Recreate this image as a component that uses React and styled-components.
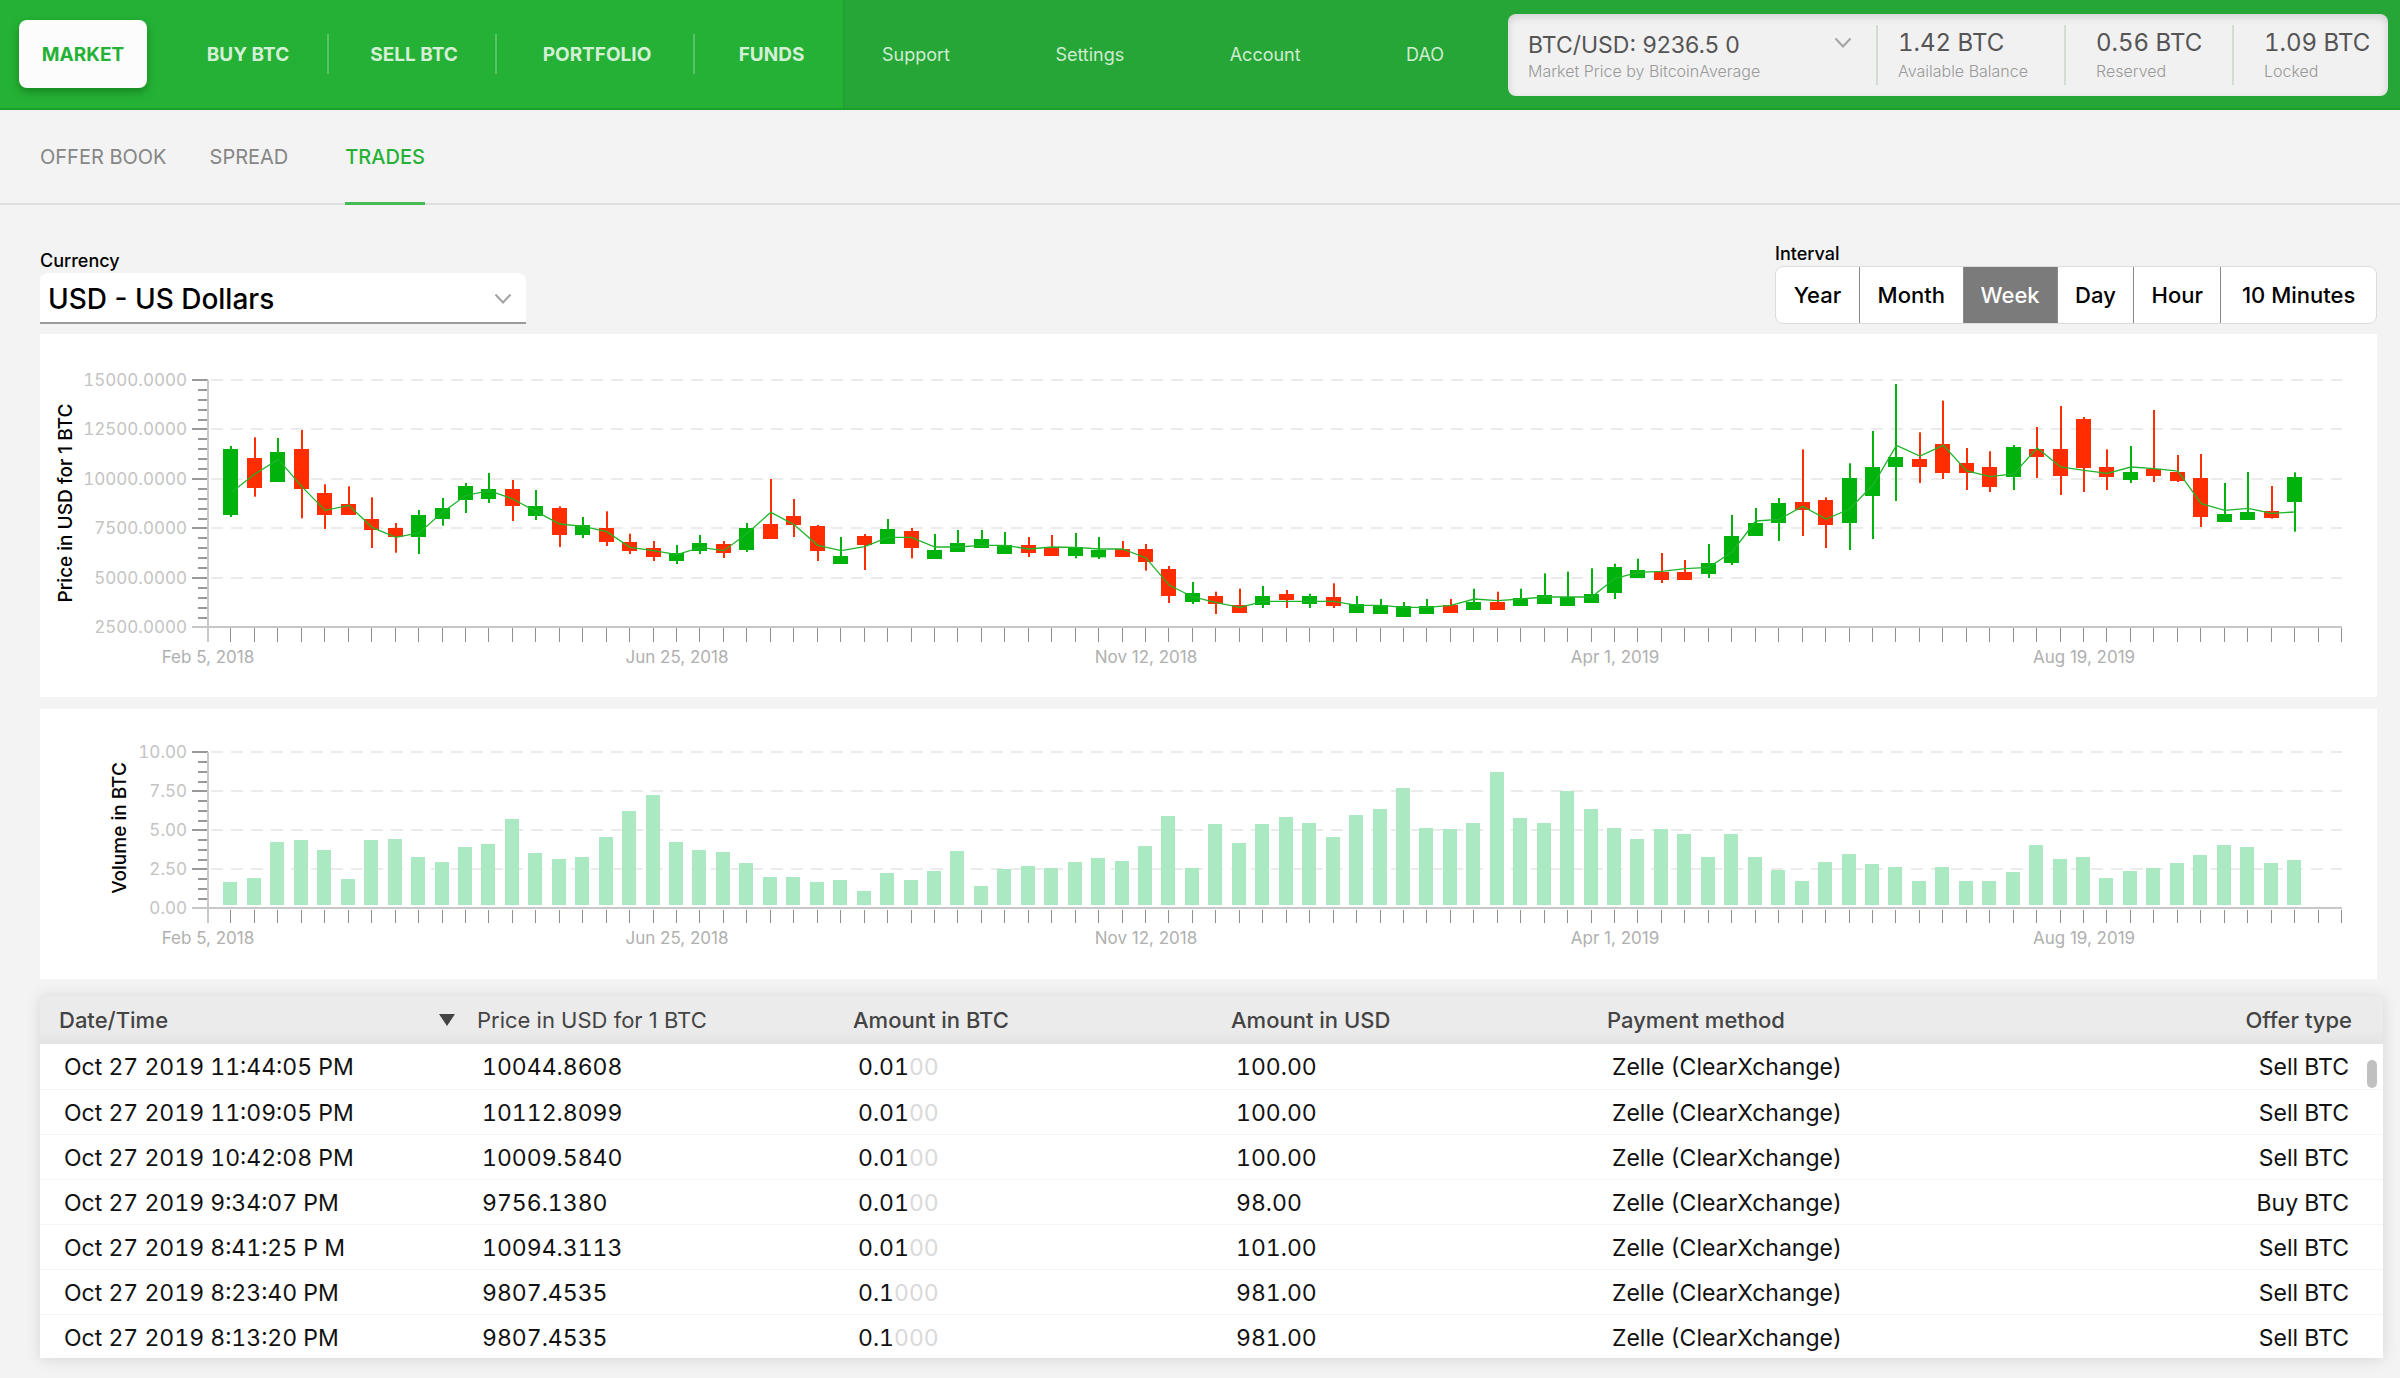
import React from "react";
import styled, { createGlobalStyle, css } from "styled-components";

const GlobalStyle = createGlobalStyle`
  *, *::before, *::after { box-sizing: border-box; }
  body {
    margin: 0;
    background: #f3f3f3;
    color: #111;
    font-family: Inter, "Liberation Sans", sans-serif;
  }
  button, select { font-family: inherit; }
`;

/* ---------- header ---------- */

const Header = styled.header`
  display: grid;
  grid-template-columns: 845px 1fr 880px;
  align-items: center;
  height: 110px;
  padding-right: 12px;
  background: #26a636;
  border-bottom: 2px solid #1c9f2a;
`;

const PrimaryNav = styled.nav`
  display: grid;
  grid-template-columns: 146px 164px 168px 198px 149px;
  align-items: center;
  align-self: stretch;
  padding-left: 19px;
  background: #25b135;
  border-right: 2px solid #22a331;
`;

const primaryText = css`
  font-size: 19px;
  line-height: 24px;
  font-weight: 700;
  text-align: center;
  text-decoration: none;
`;

const ActiveNavLink = styled.a`
  ${primaryText}
  width: 128px;
  padding: 23px 0 21px;
  border-radius: 8px;
  color: #25b135;
  background: #fcfcfc;
  box-shadow: 0 4px 8px rgba(0, 70, 10, 0.4);
`;

const NavLink = styled.a`
  ${primaryText}
  padding: 9px 0 7px 4px;
  color: #d3efd6;
  border-right: ${(p) => (p.$last ? "0" : "2px solid #5cc268")};
`;

const SecondaryNav = styled.nav`
  display: flex;
  justify-content: space-between;
  padding: 2px 64px 0 37px;
`;

const SecondaryLink = styled.a`
  font-size: 18px;
  line-height: 24px;
  color: #d0ecd3;
  text-decoration: none;
`;

const Balances = styled.div`
  display: grid;
  grid-template-columns: 370px 188px 168px 1fr;
  align-items: center;
  height: 82px;
  margin-bottom: -2px;
  border-radius: 8px;
  background: #f1f1f1;
  box-shadow: inset 0 3px 8px rgba(0, 0, 0, 0.14);
`;

const Balance = styled.div`
  display: flex;
  flex-direction: column;
  height: 60px;
  padding-left: ${(p) => p.$indent}px;
  border-right: ${(p) => (p.$last ? "0" : "2px solid #d3ddd3")};
`;

const Amount = styled.span`
  font-size: 24px;
  line-height: 36px;
  font-variant-numeric: tabular-nums;
  color: #555;
`;

const Caption = styled.label`
  font-size: 16px;
  line-height: 20px;
  font-weight: 300;
  color: #999;
`;

/* ---------- drop-downs ---------- */

const SelectFrame = styled.div`
  display: grid;
  align-items: center;
  > * { grid-area: 1 / 1; }
  > svg { justify-self: end; margin-right: ${(p) => p.$inset}px; pointer-events: none; }
`;

const PriceSelect = styled.select`
  appearance: none;
  width: 100%;
  height: 36px;
  padding: 3px 0 0;
  border: 0;
  background: transparent;
  color: #555;
  font-size: 23px;
`;

const CurrencySelect = styled.select`
  appearance: none;
  width: 100%;
  height: 51px;
  padding: 2px 8px 0;
  border: 0;
  border-bottom: 2px solid #999;
  border-radius: 8px 8px 0 0;
  background: #fff;
  color: #000;
  font-size: 28px;
  font-weight: 500;
`;

const Chevron = () => (
  <svg width="18" height="12" viewBox="0 0 18 12" fill="none" stroke="#a3a3a3" strokeWidth="2" aria-hidden="true">
    <path d="M1.5 1.5 L9 9.5 L16.5 1.5" />
  </svg>
);

/* ---------- sub navigation ---------- */

const Tabs = styled.nav`
  display: flex;
  align-items: flex-end;
  gap: 43px;
  height: 95px;
  padding-left: 40px;
  border-bottom: 2px solid #dedede;
`;

const Tab = styled.a`
  margin-bottom: -2px;
  padding-bottom: 33px;
  font-size: 20px;
  line-height: 24px;
  font-weight: ${(p) => (p.$active ? 500 : 400)};
  color: ${(p) => (p.$active ? "#25b135" : "#868686")};
  border-bottom: 3px solid ${(p) => (p.$active ? "#45bb53" : "transparent")};
  margin-left: ${(p) => (p.$active ? "14px" : "0")};
  text-decoration: none;
`;

/* ---------- page body ---------- */

const Page = styled.main`
  display: flex;
  flex-direction: column;
  padding: 39px 17px 20px 40px;
`;

const Controls = styled.div`
  display: flex;
  justify-content: space-between;
  align-items: flex-end;
  margin: 0 6px 10px 0;
`;

const Field = styled.div`
  display: flex;
  flex-direction: column;
  gap: 2px;
  width: ${(p) => p.$width}px;
`;

const FieldLabel = styled.label`
  font-size: 18px;
  line-height: 20px;
  font-weight: 500;
  color: #000;
`;

const Segments = styled.div`
  display: grid;
  grid-template-columns: 84fr 104fr 94fr 77fr 87fr 155fr;
  height: 58px;
  overflow: hidden;
  border: 1px solid #dcdcdc;
  border-radius: 8px;
  background: #fff;
`;

const Segment = styled.button`
  padding: 0;
  border: 0;
  border-right: ${(p) => (p.$last ? "0" : "1px solid #8a8a8a")};
  background: ${(p) => (p.$active ? "#7b7b7b" : "transparent")};
  color: ${(p) => (p.$active ? "#fff" : "#000")};
  font-size: 22px;
  font-weight: 500;
`;

const ChartPanel = styled.section`
  margin: 0 6px 12px 0;
  background: #fff;
  svg { display: block; width: 100%; height: auto; }
`;

const LevelText = styled.text`
  font-size: 17px;
  font-variant-numeric: tabular-nums;
  text-anchor: end;
  fill: #c3c3c3;
`;

const DateText = styled.text`
  font-size: 17px;
  text-anchor: middle;
  fill: #b0b0b0;
`;

const AxisTitle = styled.text`
  font-size: 19px;
  font-weight: 500;
  text-anchor: middle;
  fill: #000;
`;

/* ---------- charts ---------- */

const CHART_WIDTH = 2337;
const AXIS_X = 168;
const AXIS_END = 2302;
const WEEKS = 91;
const weekX = (i) => AXIS_X + ((AXIS_END - AXIS_X) * i) / WEEKS;

const DATES = [
  [0, "Feb 5, 2018"],
  [20, "Jun 25, 2018"],
  [40, "Nov 12, 2018"],
  [60, "Apr 1, 2019"],
  [80, "Aug 19, 2019"],
];

const weekTicks = Array.from({ length: WEEKS + 1 }, (_, i) => i);

// direction, body top, body bottom, wick top, wick bottom, average (three units per pixel)
const CANDLES = `
G 345 543 336 549 475|R 372 462 310 488 420|G 354 444 312 444 376|R 345 465 288 553 458|R 477 543 451 585 529
R 510 543 457 543 514|R 555 588 490 642 580|R 582 609 567 656 610|G 543 609 528 660 597|G 522 555 492 575 535
G 456 498 447 537 484|G 465 495 417 507 470|R 465 516 438 561 495|G 516 546 468 558 533|R 522 603 517 639 570
G 573 603 549 612 577|R 582 624 532 636 593|R 624 651 599 660 640|R 642 669 621 681 650|G 657 681 633 690 662
G 627 651 603 660 640|R 630 657 621 672 650|G 582 648 567 654 598|R 570 615 435 615 535|R 546 573 495 609 572
R 576 651 573 681 634|G 666 690 609 690 650|R 606 633 600 708 638|G 585 630 555 630 610|R 591 642 582 673 610
G 648 675 600 675 639|G 627 654 588 654 639|G 615 642 588 642 634|G 633 660 594 660 634|R 633 657 609 669 645
R 642 666 603 666 639|G 639 666 597 673 640|G 648 670 609 675 645|R 645 669 621 669 645|R 645 684 630 710 672
R 705 786 696 807 754|G 777 804 744 810 789|R 786 810 773 840 806|R 813 837 764 837 820|G 786 813 756 822 802
R 780 798 768 822 802|G 786 810 779 822 802|R 789 816 748 822 802|G 810 837 786 837 814|G 813 840 795 840 814
G 816 849 804 849 820|G 816 840 795 840 820|R 813 837 795 837 814|G 804 828 764 828 795|R 804 828 773 828 800
G 792 816 764 816 795|G 783 810 718 810 789|G 789 816 713 816 789|G 780 807 703 807 789|G 699 777 689 795 733
G 708 732 674 732 715|R 714 738 657 747 712|R 714 738 678 738 704|G 687 720 630 732 700|G 606 687 543 693 653
G 567 606 522 606 561|G 507 567 492 621 556|R 504 528 346 606 517|R 498 573 490 642 555|G 432 567 388 648 525
G 399 486 291 615 453|G 369 399 150 501 334|R 375 399 295 447 366|R 330 417 200 435 334|R 387 417 342 468 411
R 399 459 352 474 428|G 339 429 333 468 420|R 345 369 279 432 342|R 345 426 216 483 399|R 255 402 249 474 409
R 399 429 346 468 418|G 414 438 336 447 399|R 405 426 228 444 404|R 414 441 363 444 411|R 432 549 360 579 509
G 540 564 447 564 529|G 534 558 414 558 523|R 531 552 456 554 538|G 429 504 415 593 534
`
  .trim()
  .split(/[|\n]/)
  .map((row) => {
    const [dir, ...values] = row.trim().split(" ");
    const [top, bottom, high, low, average] = values.map((v) => Number(v) / 3);
    return { color: dir === "G" ? "#00b30c" : "#ff2d00", top, bottom, high, low, average };
  });

const PRICE_LEVELS = [
  ["15000.0000", 46],
  ["12500.0000", 95],
  ["10000.0000", 145],
  ["7500.0000", 194],
  ["5000.0000", 244],
  ["2500.0000", 293],
];

const VOLUME_LEVELS = [
  ["10.00", 43],
  ["7.50", 82],
  ["5.00", 121],
  ["2.50", 160],
  ["0.00", 199],
];

const VOLUME_TOPS = [
  546, 534, 426, 420, 450, 537, 420, 417, 471, 486, 441, 432, 357, 459, 477, 471, 411, 333, 285, 426,
  450, 456, 489, 531, 531, 546, 540, 573, 519, 540, 513, 453, 558, 507, 498, 504, 486, 474, 483, 438,
  348, 504, 372, 429, 372, 351, 369, 411, 345, 327, 264, 384, 387, 369, 216, 354, 369, 273, 327, 384,
  417, 387, 402, 471, 402, 471, 510, 543, 486, 462, 492, 501, 543, 501, 543, 543, 516, 435, 477, 471,
  534, 513, 504, 489, 465, 435, 441, 489, 480,
].map((v) => v / 3 - 9);

function Axes({ levels, minor, tickFrom, tickTo, labelY }) {
  const first = levels[0][1];
  const last = levels[levels.length - 1][1];
  return (
    <g>
      {levels.map(([label, y], n) => (
        <g key={label}>
          {y !== last && (
            <path d={`M${AXIS_X + 3} ${y} H${AXIS_END}`} stroke="#ebebeb" strokeWidth="2" strokeDasharray="12 8" />
          )}
          <path d={`M152 ${y} H${AXIS_X}`} stroke={y === last ? "#c8c8c8" : "#999"} strokeWidth="2" />
          {y !== last &&
            Array.from({ length: minor }, (_, m) => {
              const my = y + 10 * (m + 1);
              return <path key={m} d={`M158 ${my} H${AXIS_X}`} stroke="#999" strokeWidth="2" />;
            })}
          <LevelText x="147" y={y + 6}>{label}</LevelText>
        </g>
      ))}
      <path d={`M${AXIS_X} ${first} V${tickTo}`} stroke="#c8c8c8" strokeWidth="2" />
      {weekTicks.slice(1).map((i) => {
        const x = Math.round(weekX(i)) - 0.5;
        return <path key={i} d={`M${x} ${tickFrom} V${tickTo}`} stroke="#8f8f8f" />;
      })}
      <path d={`M${AXIS_X} ${last} H${AXIS_END}`} stroke="#c8c8c8" strokeWidth="2" />
      {DATES.map(([i, label]) => (
        <DateText key={label} x={weekX(i)} y={labelY}>{label}</DateText>
      ))}
    </g>
  );
}

function PriceChart() {
  const line = CANDLES.map((c, i) => `${weekX(i + 1)},${c.average}`).join(" ");
  return (
    <ChartPanel aria-label="Price chart">
      <svg viewBox={`0 0 ${CHART_WIDTH} 363`}>
        <AxisTitle transform="translate(32 169) rotate(-90)">Price in USD for 1 BTC</AxisTitle>
        <Axes levels={PRICE_LEVELS} minor={4} tickFrom={293} tickTo={308} labelY={329} />
        {CANDLES.map((c, i) => {
          const x = Math.round(weekX(i + 1));
          return (
            <g key={i} fill={c.color}>
              <rect x={x - 1} y={c.high} width="2" height={c.low - c.high} />
              <rect x={x - 8} y={c.top} width="15" height={c.bottom - c.top} />
            </g>
          );
        })}
        <polyline points={line} fill="none" stroke="#1fb52b" strokeWidth="1.3" />
      </svg>
    </ChartPanel>
  );
}

function VolumeChart() {
  return (
    <ChartPanel aria-label="Volume chart">
      <svg viewBox={`0 0 ${CHART_WIDTH} 270`}>
        <AxisTitle transform="translate(86 119) rotate(-90)">Volume in BTC</AxisTitle>
        <Axes levels={VOLUME_LEVELS} minor={3} tickFrom={201} tickTo={214} labelY={235} />
        {VOLUME_TOPS.map((top, i) => (
          <rect key={i} x={Math.round(weekX(i + 1)) - 8} y={top} width="14" height={196 - top} fill="#abe9c2" />
        ))}
      </svg>
    </ChartPanel>
  );
}

/* ---------- trades table ---------- */

const TableCard = styled.section`
  position: relative;
  height: 362px;
  overflow: hidden;
  background: #fff;
`;

const TableShadow = styled.div`
  margin-top: 5px;
  box-shadow: 0 1px 14px rgba(0, 0, 0, 0.12);
`;

const Table = styled.table`
  width: 100%;
  border-collapse: collapse;
  table-layout: fixed;
`;

const HeadCell = styled.th`
  width: ${(p) => p.$width};
  height: 48px;
  padding: 0 ${(p) => (p.$end ? 31 : 3)}px 0 19px;
  background: linear-gradient(#ebebeb 70%, #e4e4e4);
  color: #444;
  font-size: 22px;
  line-height: 24px;
  font-weight: ${(p) => (p.$light ? 400 : 500)};
  text-align: ${(p) => (p.$end ? "right" : "left")};
`;

const HeadContent = styled.div`
  display: flex;
  align-items: center;
  justify-content: space-between;
`;

const Cell = styled.td`
  height: 45px;
  padding: 2px ${(p) => (p.$end ? 34 : 0)}px 0 24px;
  border-bottom: 1px solid #f5f5f5;
  font-size: 23px;
  line-height: 28px;
  font-variant-numeric: tabular-nums;
  text-align: ${(p) => (p.$end ? "right" : "left")};
  white-space: nowrap;
`;

const Zeros = styled.span`
  color: #d9d9d9;
`;

const ScrollThumb = styled.div`
  position: absolute;
  top: 64px;
  right: 6px;
  width: 10px;
  height: 28px;
  border-radius: 5px;
  background: #c0c0c0;
`;

const TRADES = [
  ["Oct 27 2019 11:44:05 PM", "10044.8608", "0.01", "00", "100.00", "Sell BTC"],
  ["Oct 27 2019 11:09:05 PM", "10112.8099", "0.01", "00", "100.00", "Sell BTC"],
  ["Oct 27 2019 10:42:08 PM", "10009.5840", "0.01", "00", "100.00", "Sell BTC"],
  ["Oct 27 2019 9:34:07 PM", "9756.1380", "0.01", "00", "98.00", "Buy BTC"],
  ["Oct 27 2019 8:41:25 P M", "10094.3113", "0.01", "00", "101.00", "Sell BTC"],
  ["Oct 27 2019 8:23:40 PM", "9807.4535", "0.1", "000", "981.00", "Sell BTC"],
  ["Oct 27 2019 8:13:20 PM", "9807.4535", "0.1", "000", "981.00", "Sell BTC"],
];

function TradesTable() {
  return (
    <TableShadow>
      <TableCard>
        <Table>
          <thead>
            <tr>
              <HeadCell $width="418px">
                <HeadContent>
                  Date/Time
                  <svg width="16" height="12" viewBox="0 0 16 12" aria-hidden="true">
                    <path d="M0 0 H16 L8 12 Z" fill="#444" />
                  </svg>
                </HeadContent>
              </HeadCell>
              <HeadCell $width="376px" $light>Price in USD for 1 BTC</HeadCell>
              <HeadCell $width="378px">Amount in BTC</HeadCell>
              <HeadCell $width="376px">Amount in USD</HeadCell>
              <HeadCell $width="440px">Payment method</HeadCell>
              <HeadCell $end>Offer type</HeadCell>
            </tr>
          </thead>
          <tbody>
            {TRADES.map(([time, price, btc, zeros, usd, type]) => (
              <tr key={time}>
                <Cell>{time}</Cell>
                <Cell>{price}</Cell>
                <Cell>{btc}<Zeros>{zeros}</Zeros></Cell>
                <Cell>{usd}</Cell>
                <Cell>Zelle (ClearXchange)</Cell>
                <Cell $end>{type}</Cell>
              </tr>
            ))}
          </tbody>
        </Table>
        <ScrollThumb />
      </TableCard>
    </TableShadow>
  );
}

const INTERVALS = ["Year", "Month", "Week", "Day", "Hour", "10 Minutes"];

export default function App() {
  return (
    <>
      <GlobalStyle />
      <Header>
        <PrimaryNav>
          <ActiveNavLink href="#market">MARKET</ActiveNavLink>
          <NavLink href="#buy">BUY BTC</NavLink>
          <NavLink href="#sell">SELL BTC</NavLink>
          <NavLink href="#portfolio">PORTFOLIO</NavLink>
          <NavLink href="#funds" $last>FUNDS</NavLink>
        </PrimaryNav>
        <SecondaryNav>
          <SecondaryLink href="#support">Support</SecondaryLink>
          <SecondaryLink href="#settings">Settings</SecondaryLink>
          <SecondaryLink href="#account">Account</SecondaryLink>
          <SecondaryLink href="#dao">DAO</SecondaryLink>
        </SecondaryNav>
        <Balances>
          <Balance $indent={20}>
            <SelectFrame $inset={24}>
              <PriceSelect id="price">
                <option>BTC/USD: 9236.5 0</option>
              </PriceSelect>
              <Chevron />
            </SelectFrame>
            <Caption htmlFor="price">Market Price by BitcoinAverage</Caption>
          </Balance>
          <Balance $indent={20}>
            <Amount>1.42 BTC</Amount>
            <Caption as="span">Available Balance</Caption>
          </Balance>
          <Balance $indent={30}>
            <Amount>0.56 BTC</Amount>
            <Caption as="span">Reserved</Caption>
          </Balance>
          <Balance $indent={30} $last>
            <Amount>1.09 BTC</Amount>
            <Caption as="span">Locked</Caption>
          </Balance>
        </Balances>
      </Header>
      <Tabs>
        <Tab href="#offers">OFFER BOOK</Tab>
        <Tab href="#spread">SPREAD</Tab>
        <Tab href="#trades" $active>TRADES</Tab>
      </Tabs>
      <Page>
        <Controls>
          <Field $width={486}>
            <FieldLabel htmlFor="currency">Currency</FieldLabel>
            <SelectFrame $inset={14}>
              <CurrencySelect id="currency">
                <option>USD - US Dollars</option>
              </CurrencySelect>
              <Chevron />
            </SelectFrame>
          </Field>
          <Field $width={602}>
            <FieldLabel as="span" id="interval">Interval</FieldLabel>
            <Segments role="group" aria-labelledby="interval">
              {INTERVALS.map((name, i) => (
                <Segment
                  key={name}
                  type="button"
                  aria-pressed={name === "Week"}
                  $active={name === "Week"}
                  $last={i === INTERVALS.length - 1}
                >
                  {name}
                </Segment>
              ))}
            </Segments>
          </Field>
        </Controls>
        <PriceChart />
        <VolumeChart />
        <TradesTable />
      </Page>
    </>
  );
}
